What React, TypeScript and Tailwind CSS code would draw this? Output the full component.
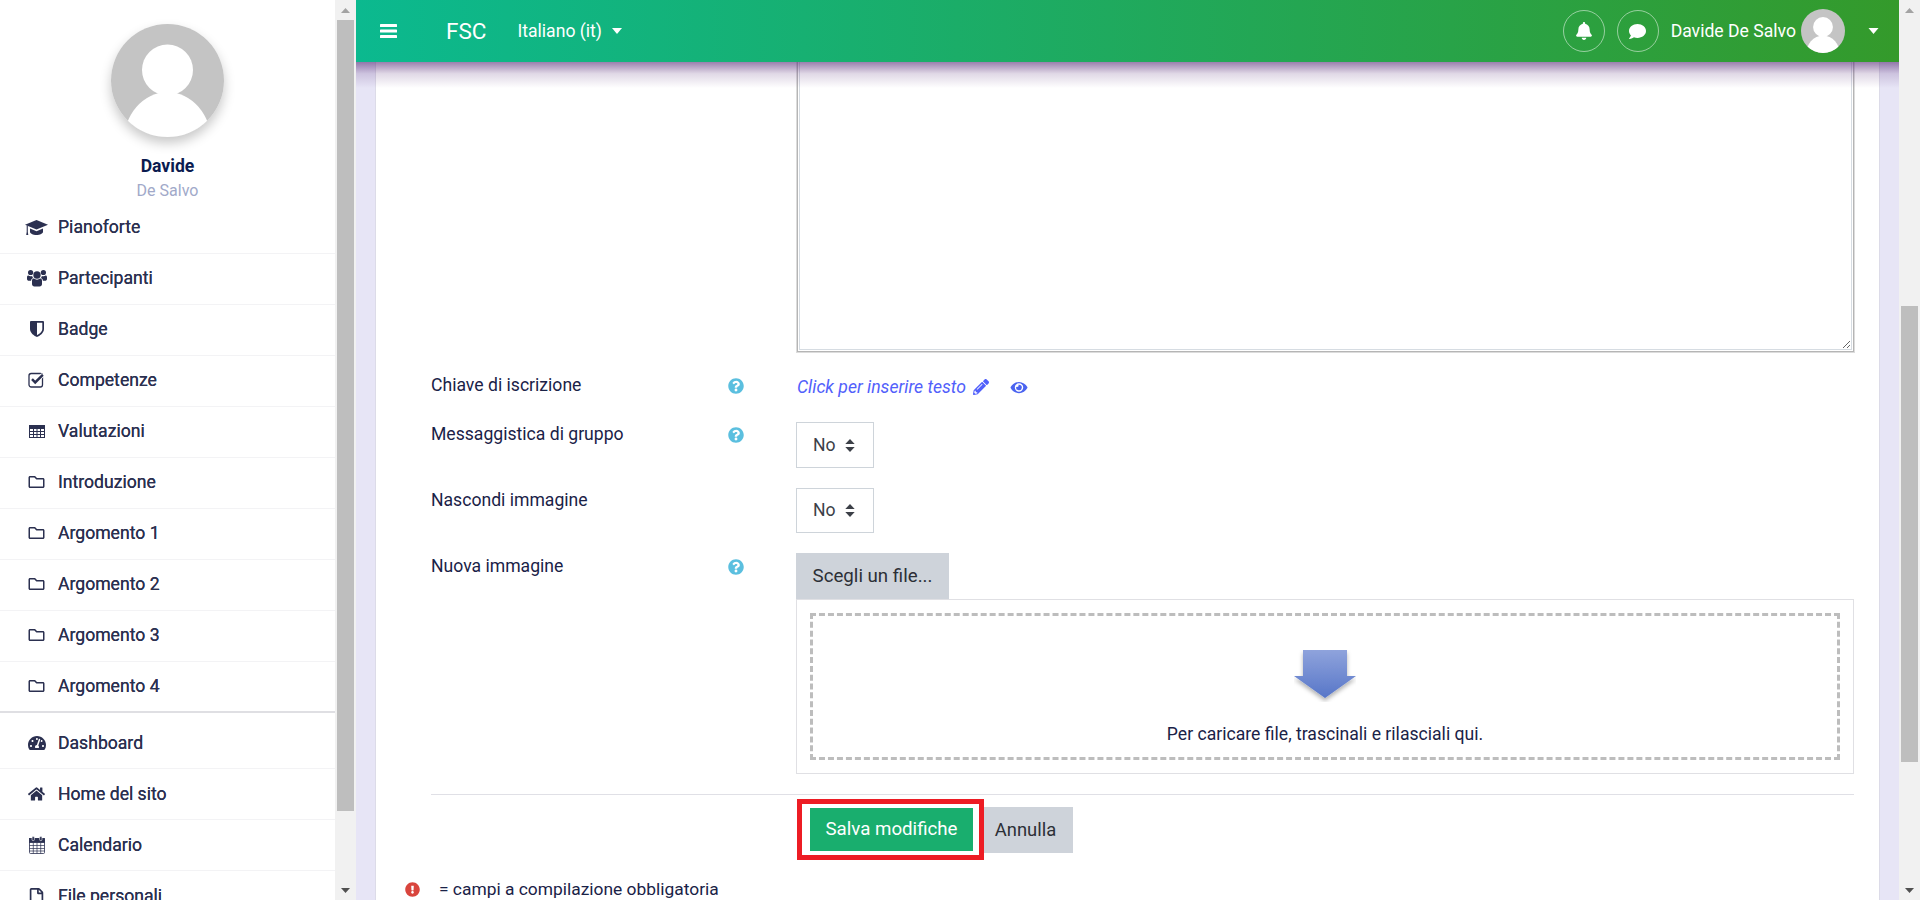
import React from "react";
import { FaRegFolder, FaTachometerAlt, FaHome, FaRegFile, FaBell, FaComment, FaQuestionCircle, FaExclamationCircle, FaPencilAlt, FaEye } from "react-icons/fa";

function Avatar({ className }: { className: string }) {
  return (
    <svg viewBox="0 0 113 113" className={className}>
      <defs>
        <clipPath id="avclip"><circle cx="56.5" cy="56.5" r="56.5" /></clipPath>
      </defs>
      <g clipPath="url(#avclip)">
        <rect width="113" height="113" fill="#c4c4c4" />
        <circle cx="56.5" cy="46" r="25.5" fill="#fff" />
        <ellipse cx="56.5" cy="119" rx="44" ry="51" fill="#fff" />
      </g>
    </svg>
  );
}

function Caret({ className }: { className: string }) {
  return (
    <svg viewBox="0 0 10 6" className={className}><path d="M0 0h10L5 6z" fill="currentColor" /></svg>
  );
}

function CapIcon() {
  return (
    <svg viewBox="0 0 23 15" className="h-[15px] w-[23px]" fill="currentColor">
      <path d="M0 4.800L11.500 0 23 4.800 11.500 9.600z" />
      <path d="M5 8.600l6.500 2.700L18 8.600v3.200c0 1.700-3 3.200-6.500 3.200S5 13.500 5 11.800z" />
      <path d="M1.700 5.500h1.100v6.500l.5 3H1.200l.5-3z" />
    </svg>
  );
}

function UsersIcon() {
  return (
    <svg viewBox="0 0 20 18" className="h-[18px] w-[20px]" fill="currentColor">
      <circle cx="10" cy="6" r="3.700" />
      <circle cx="3.600" cy="3.500" r="2.600" />
      <circle cx="16.400" cy="3.500" r="2.600" />
      <path d="M5 11.500C5 10 6.200 9.600 7 9.600c.8.700 1.800 1.100 3 1.100s2.200-.4 3-1.100c.8 0 2 .4 2 1.900v3.600c0 1.400-1 2.400-2.400 2.400H7.400C6 17.500 5 16.500 5 15.100z" />
      <path d="M0 8.100C0 7.100.6 6.500 1.400 6.500c.6.500 1.300.8 2.200.8.500 0 1-.1 1.500-.4.100.8.500 1.500 1 2-1.200.4-2 1.500-2 2.800H2C.8 11.700 0 11 0 9.900zM20 8.100C20 7.100 19.400 6.500 18.600 6.500c-.6.500-1.300.8-2.200.8-.5 0-1-.1-1.500-.4-.1.8-.5 1.500-1 2 1.200.4 2 1.500 2 2.800H18c1.200 0 2-.7 2-1.800z" />
    </svg>
  );
}

function ShieldIcon() {
  return (
    <svg viewBox="0 0 14 16" className="h-[16px] w-[14px]" fill="currentColor">
      <path fillRule="evenodd" d="M0 1.200C0 .5.500 0 1.200 0h11.600c.7 0 1.200.5 1.200 1.200V8c0 4-4.400 7-7 8-2.600-1-7-4-7-8zM7 1.800h5.300V8c0 2.800-3 5-5.300 6.100z" />
    </svg>
  );
}

function CheckIcon() {
  return (
    <svg viewBox="0 0 17 16" className="h-[16px] w-[17px]" fill="none" stroke="currentColor">
      <rect x="1" y="1.500" width="13.500" height="13.500" rx="2.200" strokeWidth="1.300" />
      <path d="M4 7.200l3.200 3.200L14.800 2.800" strokeWidth="4.200" stroke="#fff" />
      <path d="M4 7.200l3.200 3.200L14.800 2.800" strokeWidth="2.500" />
    </svg>
  );
}

function TableIcon() {
  return (
    <svg viewBox="0 0 16 13" className="h-[13px] w-[16px]" fill="none" stroke="currentColor" strokeWidth="1">
      <rect x=".5" y=".5" width="15" height="12" />
      <rect x=".5" y=".5" width="15" height="3" fill="currentColor" />
      <path d="M.5 6.500h15M.5 9.500h15M4.500 .5v12M8 .5v12M11.500 .5v12" />
    </svg>
  );
}

function CalendarIcon() {
  return (
    <svg viewBox="0 0 16 18" className="h-[18px] w-[16px]" fill="none" stroke="currentColor" strokeWidth=".8">
      <rect x=".5" y="2.500" width="15" height="15" rx="1" />
      <rect x=".5" y="2.500" width="15" height="4" fill="currentColor" />
      <path d="M.5 9.500h15M.5 12.500h15M.5 15h15M4.300 6.500v11M8 6.500v11M11.700 6.500v11" strokeWidth=".7" />
      <rect x="3" y=".6" width="2.400" height="4" rx="1" fill="currentColor" stroke="#fff" strokeWidth=".6" />
      <rect x="10.600" y=".6" width="2.400" height="4" rx="1" fill="currentColor" stroke="#fff" strokeWidth=".6" />
    </svg>
  );
}

function Row({ icon, label, noBorder, thick, lift }: { icon: React.ReactNode; label: string; noBorder?: boolean; thick?: boolean; lift?: boolean }) {
  return (
    <div className={`flex h-[51px] shrink-0 items-center border-b ${lift ? "pb-[2px]" : ""} ${thick ? "border-b-2 border-[#dfdfe3] pb-[1px]" : "border-[#f3f3f5]"} ${noBorder ? "border-b-0" : ""}`}>
      <span className="flex w-[58px] shrink-0 justify-center pl-[15px] text-[#2b3050]">{icon}</span>
      <span className="text-[17.6px] text-[#2b3050] [text-shadow:0_0_0.3px_#2b3050]">{label}</span>
    </div>
  );
}

function Scrollbar({ thumbTop, thumbHeight }: { thumbTop: string; thumbHeight: string }) {
  return (
    <div className="flex h-full w-[21px] shrink-0 flex-col items-center bg-[#f1f1f1]">
      <div className="flex h-[20px] w-full shrink-0 items-center justify-center">
        <svg viewBox="0 0 9 5" className="h-[5px] w-[9px]"><path d="M4.500 0L9 5H0z" fill="#a3a3a3" /></svg>
      </div>
      <div className="w-full flex-1 px-[2px]">
        <div className={`w-full bg-[#bebebe] ${thumbTop} ${thumbHeight}`} />
      </div>
      <div className="flex h-[20px] w-full shrink-0 items-center justify-center">
        <svg viewBox="0 0 9 5" className="h-[5px] w-[9px]"><path d="M0 0h9L4.500 5z" fill="#505050" /></svg>
      </div>
    </div>
  );
}

function SelectBox({ h }: { h: string }) {
  return (
    <div className={`flex w-[78px] items-center border border-[#ced4da] pl-[16px] text-[#3c4048] ${h}`}>
      <span className="text-[17.6px]">No</span>
      <svg viewBox="0 0 10 16" className="ml-[9px] h-[15px] w-[10px]"><path d="M0 6.500L5 1l5 5.500zM0 9.500h10L5 15z" fill="#3c4048" /></svg>
    </div>
  );
}

export default function App() {
  return (
    <div className="flex h-[900px] w-[1920px] overflow-hidden bg-white text-[17.6px] text-[#1a2247]" style={{ fontFamily: "Roboto, 'Liberation Sans', sans-serif" }}>
      <aside className="flex h-full w-[335px] shrink-0 flex-col overflow-hidden bg-white">
        <div className="flex flex-col items-center pt-[24px]">
          <div className="rounded-full shadow-[0_6px_12px_rgba(0,0,0,0.22)]">
            <Avatar className="block h-[113px] w-[113px]" />
          </div>
          <div className="mt-[17px] h-[24px] text-[17.6px] font-bold leading-[24px] text-[#0b1b50]">Davide</div>
          <div className="mt-[1px] h-[24px] text-[16px] leading-[24px] text-[#a1a9c9]">De Salvo</div>
        </div>
        <div className="flex flex-col">
          <Row lift icon={<CapIcon />} label="Pianoforte" />
          <Row lift icon={<UsersIcon />} label="Partecipanti" />
          <Row lift icon={<ShieldIcon />} label="Badge" />
          <Row lift icon={<CheckIcon />} label="Competenze" />
          <Row lift icon={<TableIcon />} label="Valutazioni" />
          <Row lift icon={<FaRegFolder className="h-[16px] w-[17px]" />} label="Introduzione" />
          <Row lift icon={<FaRegFolder className="h-[16px] w-[17px]" />} label="Argomento 1" />
          <Row lift icon={<FaRegFolder className="h-[16px] w-[17px]" />} label="Argomento 2" />
          <Row lift icon={<FaRegFolder className="h-[16px] w-[17px]" />} label="Argomento 3" />
          <Row icon={<FaRegFolder className="h-[16px] w-[17px]" />} label="Argomento 4" thick />
          <div className="h-[5px] shrink-0" />
          <Row icon={<FaTachometerAlt className="h-[16px] w-[18px]" />} label="Dashboard" />
          <Row icon={<FaHome className="h-[16px] w-[17px]" />} label="Home del sito" />
          <Row icon={<CalendarIcon />} label="Calendario" />
          <Row icon={<FaRegFile className="h-[18px] w-[15px]" />} label="File personali" noBorder />
        </div>
      </aside>
      <Scrollbar thumbTop="" thumbHeight="h-[791px]" />

      <div className="flex h-full min-w-0 flex-1 flex-col">
        <header className="relative z-10 flex h-[62px] shrink-0 items-center bg-[linear-gradient(to_right,#0bb98f,#349a2b)] text-white">
          <svg viewBox="0 0 17 14" className="ml-[24px] h-[14px] w-[17px]" fill="currentColor">
            <rect width="17" height="3" rx=".6" />
            <rect y="5.500" width="17" height="3" rx=".6" />
            <rect y="11" width="17" height="3" rx=".6" />
          </svg>
          <span className="ml-[49px] text-[22.5px] leading-none">FSC</span>
          <span className="ml-[31px] text-[17.6px]">Italiano (it)</span>
          <Caret className="ml-[10px] h-[6px] w-[10px]" />
          <div className="ml-auto flex items-center">
            <span className="flex h-[42px] w-[42px] items-center justify-center rounded-full border border-white/50"><FaBell className="h-[18px] w-[18px]" /></span>
            <span className="ml-[12px] flex h-[42px] w-[42px] items-center justify-center rounded-full border border-white/50"><FaComment className="h-[17px] w-[19px]" /></span>
            <span className="ml-[12px] text-[17.6px]">Davide De Salvo</span>
            <Avatar className="ml-[5px] h-[44px] w-[44px]" />
            <Caret className="ml-[23px] mr-[20px] h-[6px] w-[11px]" />
          </div>
          <div className="pointer-events-none absolute left-0 right-0 top-full h-[26px] bg-[linear-gradient(to_bottom,rgba(100,60,130,0.65),rgba(100,60,130,0.2)_45%,transparent)]" />
        </header>
        <main className="min-h-0 flex-1 bg-[#e7e5f6] px-[19px]">
          <div className="h-full overflow-hidden border-x border-[#dcdbe8] bg-white pl-[55px] pr-[25px]">
            <div className="-mt-[10px] ml-[366px] h-[300px] border border-[#b5b5b5] bg-white p-[1px] shadow-[0_0_0_1px_#dcdcdc]">
              <textarea className="block h-full w-full resize border border-[#d6dce2] bg-white outline-none" />
            </div>
            <div className="mt-[23px] flex h-[24px]">
              <div className="w-[297px] shrink-0 leading-[20px]">Chiave di iscrizione</div>
              <FaQuestionCircle className="mt-[3px] h-[16px] w-[16px] text-[#5bbfdf]" />
              <div className="ml-[53px] flex items-center italic text-[#5160fb]">
                <span>Click per inserire testo</span>
                <FaPencilAlt className="ml-[7px] h-[16px] w-[16px]" />
                <FaEye className="ml-[21px] h-[15px] w-[18px] text-[#4a63f0]" />
              </div>
            </div>
            <div className="mt-[23px] flex">
              <div className="w-[297px] shrink-0 leading-[24px]">Messaggistica di gruppo</div>
              <FaQuestionCircle className="mt-[5px] h-[16px] w-[16px] text-[#5bbfdf]" />
              <div className="ml-[52px]"><SelectBox h="h-[46px]" /></div>
            </div>
            <div className="mt-[20px] flex">
              <div className="w-[365px] shrink-0 leading-[24px]">Nascondi immagine</div>
              <SelectBox h="h-[45px]" />
            </div>
            <div className="mt-[20px] flex">
              <div className="w-[297px] shrink-0 pt-[1px] leading-[24px]">Nuova immagine</div>
              <FaQuestionCircle className="mt-[6px] h-[16px] w-[16px] text-[#5bbfdf]" />
              <div className="ml-[52px] flex-1">
                <div className="flex h-[46px] w-[153px] items-center justify-center bg-[#ced3da] text-[18.7px] text-[#2c2f36]">Scegli un file...</div>
                <div className="border border-[#e0e0e4] p-[13px]">
                  <div className="flex h-[147px] flex-col items-center border-[3px] border-dashed border-[#bdbdbd] pt-[34px]">
                    <svg viewBox="0 0 62 52" className="h-[52px] w-[62px]">
                      <defs>
                        <linearGradient id="arrowG" x1="0" y1="0" x2="0" y2="1">
                          <stop offset="0" stopColor="#8fa3dc" />
                          <stop offset="1" stopColor="#5776c8" />
                        </linearGradient>
                        <filter id="arrowS" x="-20%" y="-20%" width="140%" height="150%">
                          <feDropShadow dx="0" dy="3" stdDeviation="2" floodColor="#000" floodOpacity="0.3" />
                        </filter>
                      </defs>
                      <path d="M9 0h44v26h9L31 48 0 26h9z" fill="url(#arrowG)" filter="url(#arrowS)" />
                    </svg>
                    <div className="mt-[20px] leading-[24px]">Per caricare file, trascinali e rilasciali qui.</div>
                  </div>
                </div>
              </div>
            </div>
            <div className="mt-[20px] border-t border-[#e0e0e6]" />
            <div className="relative ml-[379px] mt-[13px] flex items-start">
              <div className="flex h-[43px] w-[163px] items-center justify-center bg-[#19ae6e] text-[18.7px] text-white">Salva modifiche</div>
              <div className="ml-[7px] -mt-[1px] flex h-[46px] w-[93px] items-center justify-center bg-[#ced3da] pr-[2px] text-[18.4px] text-[#2c2f36]">Annulla</div>
              <div className="absolute -left-[13px] -top-[9px] h-[61px] w-[187px] border-[5px] border-[#ed1c24]" />
            </div>
            <div className="-ml-[26px] mt-[23px] flex items-center">
              <FaExclamationCircle className="h-[15px] w-[15px] text-[#d9453d]" />
              <span className="ml-[19px] text-[17.4px]">= campi a compilazione obbligatoria</span>
            </div>
          </div>
        </main>
      </div>
      <Scrollbar thumbTop="mt-[286px]" thumbHeight="h-[456px]" />
    </div>
  );
}
